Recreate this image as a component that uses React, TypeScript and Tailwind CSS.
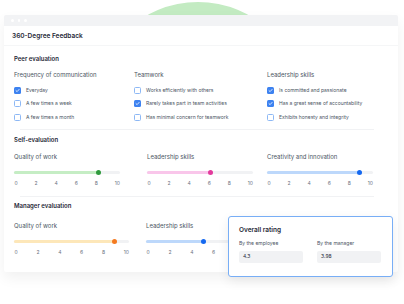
import React from 'react'

interface Slider {
  label: string
  value: number
  track: string
  knob: string
}

function Check({ checked }: { checked: boolean }) {
  return checked ? (
    <span className="w-[7px] h-[7px] rounded-[1.5px] bg-[#3d82f0] flex items-center justify-center shrink-0">
      <svg width="5" height="5" viewBox="0 0 10 10">
        <path d="M2 5.2 L4.2 7.3 L8.2 2.8" stroke="white" strokeWidth="1.6" fill="none" strokeLinecap="round" strokeLinejoin="round" />
      </svg>
    </span>
  ) : (
    <span className="w-[7px] h-[7px] rounded-[1.5px] border border-[#8db8f5] bg-white shrink-0" />
  )
}

function CheckColumn({ title, items, width }: { title: string; items: [string, boolean][]; width: string }) {
  return (
    <div className={`${width} shrink-0`}>
      <p className="text-[6px] text-[#4b5563] leading-[8px]">{title}</p>
      <div className="mt-[8px] flex flex-col gap-[6.5px]">
        {items.map(([t, c]) => (
          <div key={t} className="flex items-center gap-[5px] h-[7px]">
            <Check checked={c} />
            <span className="text-[5px] text-[#4b5563] leading-[7px] whitespace-nowrap">{t}</span>
          </div>
        ))}
      </div>
    </div>
  )
}

function SliderBlock({ s, width, className = '' }: { s: Slider; width: number; className?: string }) {
  const pct = (s.value / 10) * 100
  return (
    <div className={`shrink-0 ${className}`} style={{ width }}>
      <p className="text-[6px] text-[#4b5563] leading-[8px]">{s.label}</p>
      <div className="relative mt-[10px] h-[3px] rounded-full bg-[#f1f2f4]">
        <div className={`absolute left-0 top-0 h-[3px] rounded-full ${s.track}`} style={{ width: `${pct}%` }} />
        <div
          className={`absolute top-[-1px] w-[5px] h-[5px] rounded-full ${s.knob}`}
          style={{ left: `calc(${pct}% - 2.5px)` }}
        />
      </div>
      <div className="mt-[6px] flex justify-between pl-[0.5px] text-[5px] leading-[6px] text-[#6b7280]">
        {[0, 2, 4, 6, 8, 10].map((n) => (
          <span key={n}>{n}</span>
        ))}
      </div>
    </div>
  )
}

export default function App() {
  return (
    <div className="relative w-[404px] h-[304px] overflow-hidden bg-white font-['Inter',sans-serif]">
      {/* green blob behind window */}
      <div className="absolute left-[93px] top-[2px] w-[210px] h-[210px] rounded-full bg-[#c3ebc2]" />

      {/* window */}
      <div className="relative ml-[4px] mt-[15px] w-[394px] h-[257px] bg-white rounded-[2px] shadow-[0_6px_14px_rgba(0,0,0,0.06)]">
        <div className="h-[11px] bg-[#f2f3f5] rounded-t-[2px] flex items-center gap-[4px] pl-[7px]">
          <span className="w-[2.5px] h-[2.5px] rounded-full bg-white" />
          <span className="w-[2.5px] h-[2.5px] rounded-full bg-white" />
          <span className="w-[2.5px] h-[2.5px] rounded-full bg-white" />
        </div>
        <div className="h-[20px] flex items-center pl-[8px] pt-[3px] border-b border-[#f5f6f7]">
          <span className="text-[6.5px] font-semibold text-[#1f2937]">360-Degree Feedback</span>
        </div>

        <div className="pl-[10px]">
          {/* Peer evaluation */}
          <p className="mt-[8.5px] text-[6px] font-semibold text-[#1f2937] leading-[8px]">Peer evaluation</p>
          <div className="mt-[8px] flex">
            <CheckColumn
              width="w-[120px]"
              title="Frequency of communication"
              items={[
                ['Everyday', true],
                ['A few times a week', false],
                ['A few times a month', false],
              ]}
            />
            <CheckColumn
              width="w-[133px]"
              title="Teamwork"
              items={[
                ['Works efficiently with others', false],
                ['Rarely takes part in team activities', true],
                ['Has minimal concern for teamwork', false],
              ]}
            />
            <CheckColumn
              width="w-[120px]"
              title="Leadership skills"
              items={[
                ['Is committed and passionate', true],
                ['Has a great sense of accountability', true],
                ['Exhibits honesty and integrity', false],
              ]}
            />
          </div>
          <div className="mt-[8px] ml-[6px] w-[354px] border-t border-[#f1f2f4]" />

          {/* Self-evaluation */}
          <p className="mt-[6px] text-[6px] font-semibold text-[#1f2937] leading-[8px]">Self-evaluation</p>
          <div className="mt-[9px] flex">
            <SliderBlock width={106} s={{ label: 'Quality of work', value: 8, track: 'bg-[#c5edc4]', knob: 'bg-[#2f9a3d]' }} />
            <SliderBlock className="ml-[27px]" width={106} s={{ label: 'Leadership skills', value: 6, track: 'bg-[#f9c6ea]', knob: 'bg-[#e23a9c]' }} />
            <SliderBlock className="ml-[14px]" width={106} s={{ label: 'Creativity and innovation', value: 8.7, track: 'bg-[#bdd8fb]', knob: 'bg-[#1468f0]' }} />
          </div>
          <div className="mt-[10px] ml-[6px] w-[354px] border-t border-[#f1f2f4]" />

          {/* Manager evaluation */}
          <p className="mt-[5px] text-[6px] font-semibold text-[#1f2937] leading-[8px]">Manager evaluation</p>
          <div className="mt-[12px] flex gap-[17px]">
            <SliderBlock width={115} s={{ label: 'Quality of work', value: 8.7, track: 'bg-[#fde7b9]', knob: 'bg-[#f47a20]' }} />
            <SliderBlock width={115} s={{ label: 'Leadership skills', value: 5, track: 'bg-[#bdd8fb]', knob: 'bg-[#1468f0]' }} />
          </div>
        </div>
      </div>

      {/* Overall rating card */}
      <div className="absolute left-[228px] top-[216px] w-[165px] h-[61px] bg-white border border-[#78aef6] rounded-[3px] shadow-[0_4px_12px_rgba(0,0,0,0.08)] px-[10px] pt-[9px]">
        <p className="text-[6.5px] font-semibold text-[#1f2937] leading-[9px]">Overall rating</p>
        <div className="mt-[5px] flex gap-[14px]">
          <div className="w-[64px]">
            <p className="text-[5px] text-[#4b5563] leading-[7px]">By the employee</p>
            <div className="mt-[4px] h-[12px] rounded-[2px] bg-[#f1f2f4] flex items-center pl-[4px] text-[5px] text-[#1f2937]">4.3</div>
          </div>
          <div className="w-[64px]">
            <p className="text-[5px] text-[#4b5563] leading-[7px]">By the manager</p>
            <div className="mt-[4px] h-[12px] rounded-[2px] bg-[#f1f2f4] flex items-center pl-[4px] text-[5px] text-[#1f2937]">3.98</div>
          </div>
        </div>
      </div>
    </div>
  )
}
